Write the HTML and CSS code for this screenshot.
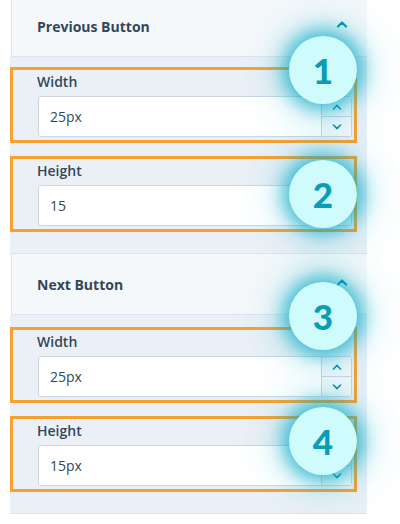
FILE: index.html
```html
<!DOCTYPE html>
<html lang="en">
<head>
    <meta charset="UTF-8">
    <meta name="viewport" content="width=device-width, initial-scale=1.0">
    <title>Button Settings</title>
    <link rel="stylesheet" href="styles.css">
</head>
<body>
    <div class="sidebar">
        <!-- Previous button group -->
        <section class="group">
            <div class="group-header">
                <h3>Previous Button</h3>
                <svg class="caret" width="12" height="8" viewBox="0 0 12 8"><path d="M2 6.5 L6 2.5 L10 6.5" fill="none" stroke="currentColor" stroke-width="2.2" stroke-linecap="round" stroke-linejoin="round"/></svg>
            </div>
            <div class="group-body">
                <div class="field">
                    <label>Width</label>
                    <div class="input">
                        <span>25px</span>
                        <div class="spinner">
                            <div class="spin"><svg width="10" height="6" viewBox="0 0 10 6"><path d="M1.5 5 L5 1.5 L8.5 5" fill="none" stroke="currentColor" stroke-width="1.6" stroke-linecap="round"/></svg></div>
                            <div class="spin"><svg width="10" height="6" viewBox="0 0 10 6"><path d="M1.5 1 L5 4.5 L8.5 1" fill="none" stroke="currentColor" stroke-width="1.6" stroke-linecap="round"/></svg></div>
                        </div>
                    </div>
                    <span class="badge badge-1">1</span>
                </div>
                <div class="field">
                    <label>Height</label>
                    <div class="input"><span>15</span></div>
                    <span class="badge badge-2">2</span>
                </div>
            </div>
        </section>

        <!-- Next button group -->
        <section class="group">
            <div class="group-header">
                <h3>Next Button</h3>
                <svg class="caret" width="12" height="8" viewBox="0 0 12 8"><path d="M2 6.5 L6 2.5 L10 6.5" fill="none" stroke="currentColor" stroke-width="2.2" stroke-linecap="round" stroke-linejoin="round"/></svg>
            </div>
            <div class="group-body second">
                <div class="field">
                    <label>Width</label>
                    <div class="input">
                        <span>25px</span>
                        <div class="spinner">
                            <div class="spin"><svg width="10" height="6" viewBox="0 0 10 6"><path d="M1.5 5 L5 1.5 L8.5 5" fill="none" stroke="currentColor" stroke-width="1.6" stroke-linecap="round"/></svg></div>
                            <div class="spin"><svg width="10" height="6" viewBox="0 0 10 6"><path d="M1.5 1 L5 4.5 L8.5 1" fill="none" stroke="currentColor" stroke-width="1.6" stroke-linecap="round"/></svg></div>
                        </div>
                    </div>
                    <span class="badge badge-3">3</span>
                </div>
                <div class="field">
                    <label>Height</label>
                    <div class="input">
                        <span>15px</span>
                        <div class="spinner">
                            <div class="spin"><svg width="10" height="6" viewBox="0 0 10 6"><path d="M1.5 5 L5 1.5 L8.5 5" fill="none" stroke="currentColor" stroke-width="1.6" stroke-linecap="round"/></svg></div>
                            <div class="spin"><svg width="10" height="6" viewBox="0 0 10 6"><path d="M1.5 1 L5 4.5 L8.5 1" fill="none" stroke="currentColor" stroke-width="1.6" stroke-linecap="round"/></svg></div>
                        </div>
                    </div>
                    <span class="badge badge-4">4</span>
                </div>
            </div>
        </section>
    </div>
</body>
</html>
```
FILE: styles.css
```css
body {
    margin: 0;
    background-color: #fff;
    font-family: "Open Sans", Lato, sans-serif;
    color: #33475b;
}

.sidebar {
    width: 355px;
    margin: -4px 0 0 11px;
    border-left: 1px solid #dfe3eb;
}

.group-header {
    height: 60px;
    display: flex;
    align-items: center;
    justify-content: space-between;
    padding: 0 19px 0 25px;
    background-color: #f5f8fa;
    border-bottom: 1px solid #dfe3eb;
}

.group-header h3 {
    margin: 0;
    font-size: 14px;
    font-weight: 700;
}

.caret {
    color: #0091ae;
    margin-top: -4px;
}

.group-body {
    display: flex;
    flex-direction: column;
    gap: 13px;
    padding: 10px 10px 21px 0;
    margin-left: -2px;
    background-color: #eaf0f6;
    border-bottom: 1px solid #dfe3eb;
}

.group-body.second {
    padding-top: 12px;
}

/* Orange annotation box around each field */
.field {
    position: relative;
    border: 3px solid #f8a030;
    padding: 2px 2px 3px 25px;
}

.field label {
    display: block;
    height: 20px;
    line-height: 20px;
    margin: 0 0 4px -1px;
    font-size: 14px;
    font-weight: 600;
}

.input {
    height: 39px;
    display: flex;
    align-items: center;
    justify-content: space-between;
    background-color: #fff;
    border: 1px solid #cbd6e2;
    border-radius: 3px;
    font-size: 14px;
    padding-left: 11px;
}

.spinner {
    width: 29px;
    height: 100%;
    display: flex;
    flex-direction: column;
    border-left: 1px solid #cbd6e2;
    background-color: #f5f8fa;
}

.spin {
    flex: 1;
    display: flex;
    align-items: center;
    justify-content: center;
    color: #0091ae;
}

.spin + .spin {
    border-top: 1px solid #cbd6e2;
}

/* Numbered callouts */
.badge {
    position: absolute;
    right: -3px;
    width: 68px;
    height: 68px;
    border-radius: 50%;
    display: flex;
    align-items: center;
    justify-content: center;
    background-color: #cffbfd;
    box-shadow: 0 0 18px 6px rgba(0, 165, 195, 0.7), 0 0 40px 14px rgba(0, 180, 210, 0.22);
    color: #0b9db3;
    font-family: Lato, sans-serif;
    font-size: 35px;
    font-weight: 900;
    z-index: 2;
}

.badge-1 { top: -34px; }
.badge-2 { top: 1px; }
.badge-3 { top: -48px; }
.badge-4 { top: -12px; }
```
